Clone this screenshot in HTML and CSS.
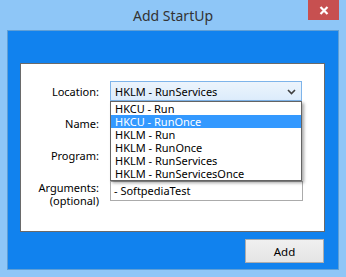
FILE: index.html
```html
<!DOCTYPE html>
<html lang="en">
<head>
    <meta charset="UTF-8">
    <title>Add StartUp</title>
    <link rel="stylesheet" href="styles.css">
</head>
<body>

    <div class="window">
        <div class="titlebar">
            <div class="title">Add StartUp</div>
            <div class="close">
                <svg width="10" height="9" viewBox="0 0 10 9">
                    <path d="M1.5 1 L8.5 8 M8.5 1 L1.5 8" stroke="#fff" stroke-width="2.2" fill="none"/>
                </svg>
            </div>
        </div>

        <div class="client">
            <div class="panel">
                <div class="form">
                    <div class="label">Location:</div>
                    <div class="field">
                        <div class="select">
                            <span>HKLM - RunServices</span>
                            <svg class="chevron" width="9" height="6" viewBox="0 0 9 6">
                                <path d="M1 1 L4.5 4.5 L8 1" stroke="#404040" stroke-width="1.6" fill="none"/>
                            </svg>
                        </div>
                        <ul class="dropdown">
                            <li>HKCU - Run</li>
                            <li class="selected">HKCU - RunOnce</li>
                            <li>HKLM - Run</li>
                            <li>HKLM - RunOnce</li>
                            <li>HKLM - RunServices</li>
                            <li>HKLM - RunServicesOnce</li>
                        </ul>
                    </div>

                    <div class="label">Name:</div>
                    <div class="input"></div>

                    <div class="label">Program:</div>
                    <div class="input"></div>

                    <div class="label label-multi">Arguments:<br>(optional)</div>
                    <div class="input input-last">- SoftpediaTest</div>
                </div>
            </div>

            <div class="actions">
                <button class="button">Add</button>
            </div>
        </div>
    </div>

</body>
</html>
```

FILE: styles.css
```css
body {
    margin: 0;
    font-family: "Noto Sans", "Open Sans", sans-serif;
    font-size: 11px;
    color: #000;
}

.window {
    width: 346px;
    height: 277px;
    background-color: #8ec6f7;
    box-sizing: border-box;
    padding: 0 7px;
}

.titlebar {
    position: relative;
    height: 30px;
}

.title {
    text-align: center;
    font-size: 14px;
    line-height: 31px;
    color: #333;
}

.close {
    position: absolute;
    top: 0;
    right: 0;
    width: 31px;
    height: 20px;
    background-color: #c75050;
    display: flex;
    justify-content: center;
    align-items: center;
}

.client {
    height: 240px;
    box-sizing: border-box;
    border: 1px solid #5f9fd6;
    background-color: #1182ee;
    padding: 32px 13px 0 12px;
}

.panel {
    height: 169px;
    box-sizing: border-box;
    background: #fff;
    border: 1px solid #6a6a6a;
}

.form {
    display: grid;
    grid-template-columns: 78px 192px;
    column-gap: 11px;
    row-gap: 12px;
    padding-top: 17px;
}

.label {
    text-align: right;
    align-self: center;
    line-height: 13px;
}

.label-multi {
    align-self: start;
    margin-top: 4px;
}

.field {
    position: relative;
}

.select {
    height: 20px;
    box-sizing: border-box;
    border: 1px solid #7eb4ea;
    background: linear-gradient(#ecf4fc, #dcecfc);
    display: flex;
    align-items: center;
    justify-content: space-between;
    padding: 0 5px 0 4px;
}

.chevron {
    margin-top: 1px;
}

.dropdown {
    position: absolute;
    top: 100%;
    left: 0;
    right: 0;
    margin: 0;
    padding: 0;
    list-style: none;
    background: #fff;
    border: 1px solid #646464;
    box-shadow: 2px 2px 3px rgba(0, 0, 0, 0.35);
    z-index: 2;
}

.dropdown li {
    height: 13px;
    line-height: 13px;
    padding-left: 4px;
    white-space: nowrap;
}

.dropdown li.selected {
    background-color: #3399ff;
    color: #fff;
}

.input {
    height: 20px;
    box-sizing: border-box;
    border: 1px solid #ababab;
    line-height: 18px;
    padding-left: 3px;
}

.input-last {
    margin-top: 4px;
    width: 193px;
}

.actions {
    display: flex;
    justify-content: flex-end;
    margin-top: 7px;
    padding-right: 1px;
}

.button {
    width: 79px;
    height: 24px;
    border: 1px solid #adadad;
    background: linear-gradient(#f0f0f0, #e5e5e5);
    font-family: "Noto Sans", "Open Sans", sans-serif;
    font-size: 11.5px;
    color: #000;
    padding: 0;
}
```
